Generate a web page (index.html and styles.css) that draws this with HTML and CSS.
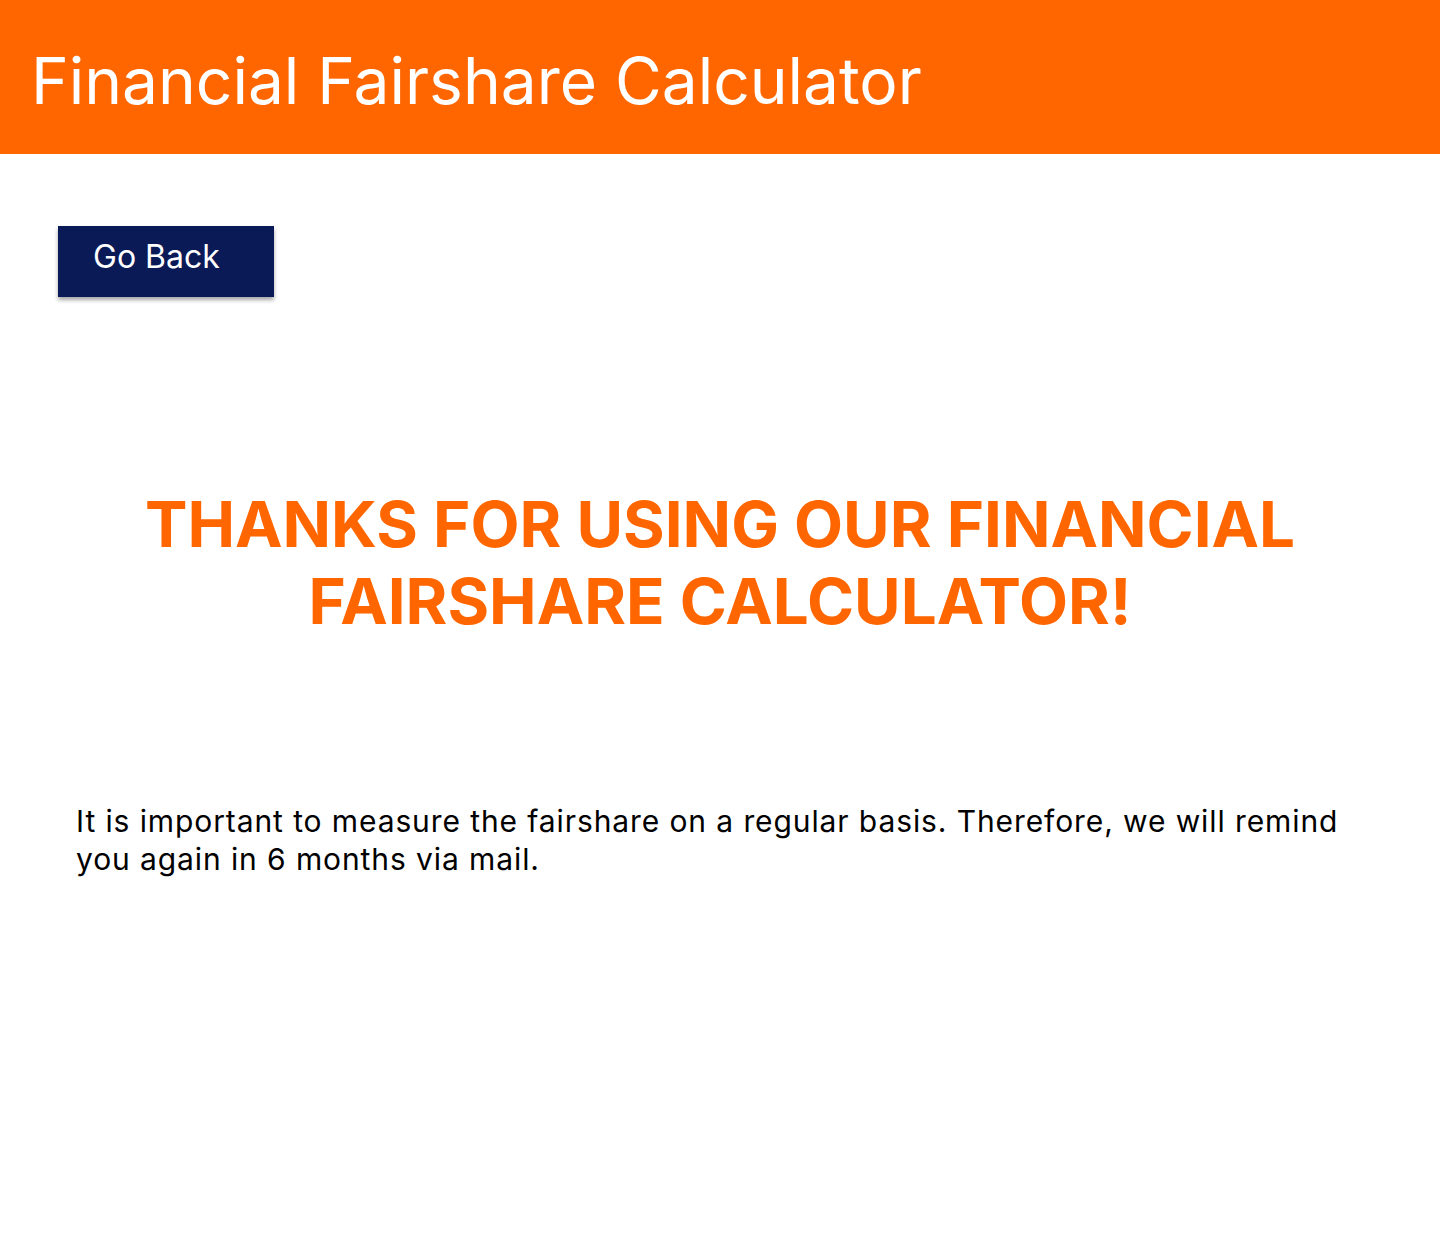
FILE: index.html
```html
<!DOCTYPE html>
<html lang="en">
<head>
<meta charset="utf-8">
<title>Financial Fairshare Calculator</title>
<link rel="stylesheet" href="styles.css">
</head>
<body>
<header class="topbar">
  <h1 class="app-title">Financial Fairshare Calculator</h1>
</header>
<main class="content">
  <button class="back-btn" type="button">Go Back</button>
  <h2 class="thanks">THANKS FOR USING OUR FINANCIAL<br>FAIRSHARE CALCULATOR!</h2>
  <p class="note">It is important to measure the fairshare on a regular basis. Therefore, we will remind you again in 6 months via mail.</p>
</main>
</body>
</html>
```
FILE: styles.css
```css
* { box-sizing: border-box; }
html, body {
  margin: 0;
  padding: 0;
  background: #ffffff;
  font-family: Inter, "Noto Sans", sans-serif;
}
.topbar {
  background: #ff6600;
  height: 154px;
  display: flex;
  align-items: center;
  padding-left: 31px;
}
.app-title {
  margin: 0;
  color: #ffffff;
  font-weight: 400;
  font-size: 64px;
  line-height: 1;
  padding-top: 8px;
}
.content {
  display: flex;
  flex-direction: column;
  padding: 72px 0 0 0;
}
.back-btn {
  align-self: flex-start;
  margin-left: 58px;
  width: 216px;
  height: 71px;
  background: #0a1a57;
  color: #ffffff;
  border: none;
  border-radius: 0;
  font-family: Inter, "Noto Sans", sans-serif;
  font-size: 32px;
  text-align: left;
  padding: 0 0 10px 35px;
  box-shadow: 0 3px 4px rgba(0, 0, 0, 0.35);
}
.thanks {
  margin: 188px 0 0 0;
  text-align: center;
  color: #ff6600;
  font-weight: 700;
  font-size: 63.7px;
  line-height: 77px;
}
.note {
  margin: 163px 0 0 76px;
  max-width: 1290px;
  font-size: 30px;
  letter-spacing: 0.9px;
  line-height: 38px;
  color: #000000;
}
```
